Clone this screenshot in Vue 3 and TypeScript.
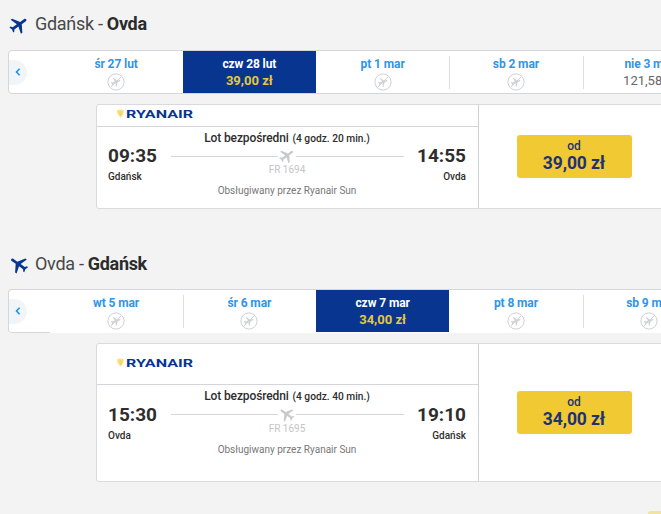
<script setup lang="ts">
interface Day {
  label: string
  price?: string
  active?: boolean
}

interface Flight {
  id: string
  direction: 'out' | 'back'
  from: string
  to: string
  days: Day[]
  departure: string
  arrival: string
  duration: string
  number: string
  price: string
}

const flights: Flight[] = [
  {
    id: 'outbound',
    direction: 'out',
    from: 'Gdańsk',
    to: 'Ovda',
    days: [
      { label: 'śr 27 lut' },
      { label: 'czw 28 lut', price: '39,00 zł', active: true },
      { label: 'pt 1 mar' },
      { label: 'sb 2 mar' },
      { label: 'nie 3 mar', price: '121,58 zł' },
    ],
    departure: '09:35',
    arrival: '14:55',
    duration: '(4 godz. 20 min.)',
    number: 'FR 1694',
    price: '39,00 zł',
  },
  {
    id: 'inbound',
    direction: 'back',
    from: 'Ovda',
    to: 'Gdańsk',
    days: [
      { label: 'wt 5 mar' },
      { label: 'śr 6 mar' },
      { label: 'czw 7 mar', price: '34,00 zł', active: true },
      { label: 'pt 8 mar' },
      { label: 'sb 9 mar' },
    ],
    departure: '15:30',
    arrival: '19:10',
    duration: '(4 godz. 40 min.)',
    number: 'FR 1695',
    price: '34,00 zł',
  },
]

const plane =
  'M21 16v-2l-8-5V3.5c0-.83-.67-1.5-1.5-1.5S10 2.67 10 3.5V9l-8 5v2l8-2.5V19l-2 1.5V22l3.5-1 3.5 1v-1.5L13 19v-5.5l8 2.5z'
</script>

<template>
  <main class="page">
    <section v-for="f in flights" :key="f.id" class="flight" :class="f.direction">
      <h2 class="title">
        <svg class="title-icon" viewBox="0 0 24 24"><path :d="plane" /></svg>
        <span class="title-text">{{ f.from }} - <b>{{ f.to }}</b></span>
      </h2>

      <div class="strip">
        <div class="prev-wrap">
          <button class="prev" aria-label="Poprzedni">
            <svg viewBox="0 0 6 8"><path d="M4.6 0.8 1.5 4l3.1 3.2" /></svg>
          </button>
        </div>
        <div v-for="d in f.days" :key="d.label" class="day" :class="{ active: d.active }">
          <span class="day-label">{{ d.label }}</span>
          <span v-if="d.price" class="day-price">{{ d.price }}</span>
          <svg v-else class="no-flight" viewBox="0 0 18 18">
            <circle cx="9" cy="9" r="8.1" />
            <g transform="translate(9 9) rotate(70) scale(.48) translate(-11.5 -12)">
              <path :d="plane" />
            </g>
            <line x1="3.6" y1="14.4" x2="14.4" y2="3.6" />
          </svg>
        </div>
      </div>

      <div class="card">
        <div class="details">
          <div class="carrier">
            <svg class="logo" viewBox="0 0 78 12">
              <path
                class="harp"
                d="M.8 2.6Q2.6.8 4.3 1.8 6.1.8 7.9 2.4 7.8 6.4 4.8 9.7 1.1 7.1.8 2.6z"
              />
              <path class="harp-line" d="M2.5 3 5 8M4.3 2.6 5.4 7M6.2 2.8 5.7 6.5" />
              <text x="10" y="9.8" textLength="67" lengthAdjust="spacingAndGlyphs">RYANAIR</text>
            </svg>
          </div>
          <div class="route">
            <div class="point">
              <strong>{{ f.departure }}</strong>
              <span>{{ f.from }}</span>
            </div>
            <div class="middle">
              <div class="kind">
                Lot bezpośredni <small>{{ f.duration }}</small>
              </div>
              <div class="line">
                <svg viewBox="0 0 24 24"><path :d="plane" /></svg>
              </div>
              <div class="number">{{ f.number }}</div>
              <div class="operator">Obsługiwany przez Ryanair Sun</div>
            </div>
            <div class="point end">
              <strong>{{ f.arrival }}</strong>
              <span>{{ f.to }}</span>
            </div>
          </div>
        </div>
        <div class="offer">
          <button class="buy">
            <span>od</span>
            <strong>{{ f.price }}</strong>
          </button>
        </div>
      </div>
    </section>
    <div class="next-button"></div>
  </main>
</template>

<style>
body {
  background: #f3f3f3;
}
</style>

<style scoped>
.page {
  box-sizing: border-box;
  width: 661px;
  height: 514px;
  overflow: hidden;
  background: #f3f3f3;
  font-family: Roboto, 'Noto Sans', sans-serif;
  color: #2e2e2e;
}

.flight {
  height: 240px;
}

.flight.back {
  height: 271px;
}

.title {
  display: flex;
  align-items: center;
  height: 50px;
  box-sizing: border-box;
  margin: 0;
  padding: 0 0 3px 8px;
  font-size: 18px;
  font-weight: 400;
  letter-spacing: -0.3px;
  color: #484848;
}

.back .title {
  height: 49px;
  padding-bottom: 3px;
}

.title b {
  font-weight: 700;
  color: #2b2b2b;
}

.title-icon {
  width: 22px;
  height: 22px;
  margin-right: 5px;
  fill: #073590;
  transform: translateY(1px) rotate(54deg);
}

.back .title-icon {
  transform: translateY(1px) rotate(-54deg);
}

.strip {
  display: flex;
  box-sizing: border-box;
  width: 720px;
  height: 44px;
  margin-left: 8px;
  border: 1px solid #d3d6da;
  border-radius: 4px 0 0 4px;
  background: #fff;
}

.back .strip {
  border-bottom-color: #fff;
}

.prev-wrap {
  display: flex;
  align-items: center;
  flex: none;
  width: 41px;
  margin-right: -0.6px;
}

.back .prev-wrap {
  height: 42px;
  border-bottom: 1px solid #d3d6da;
  border-bottom-left-radius: 3px;
}

.prev {
  display: flex;
  align-items: center;
  justify-content: center;
  width: 18px;
  height: 25px;
  padding: 0;
  border: 0;
  border-radius: 0 13px 13px 0;
  background: #f2f5f7;
}

.prev svg {
  width: 6px;
  height: 8px;
  fill: none;
  stroke: #2091eb;
  stroke-width: 1.6;
}

.day {
  position: relative;
  display: flex;
  flex-direction: column;
  align-items: center;
  flex: none;
  box-sizing: border-box;
  width: 133.3px;
  height: 42px;
  padding-top: 5px;
  font-size: 12px;
  line-height: 16px;
}

.day + .day:not(.active)::before {
  content: '';
  position: absolute;
  left: 0;
  top: 5px;
  height: 33px;
  border-left: 1px solid #dcdee1;
}

.day.active + .day::before {
  display: none;
}

.day.active {
  background: #073590;
}

.day-label {
  font-weight: 700;
  letter-spacing: -0.1px;
  color: #2f95e8;
}

.active .day-label {
  color: #fff;
}

.day-price {
  font-size: 13px;
  line-height: 18px;
  color: #666;
}

.active .day-price {
  font-weight: 700;
  color: #e6c83c;
}

.no-flight {
  width: 18px;
  height: 18px;
  margin-top: 1px;
  fill: none;
  stroke: #cfd1d4;
}

.no-flight g {
  fill: #cfd1d4;
  stroke: none;
}

.card {
  display: flex;
  box-sizing: border-box;
  width: 574px;
  height: 105px;
  margin: 10px 0 0 96px;
  border: 1px solid #d8dadd;
  border-radius: 3px;
  background: #fff;
}

.back .card {
  height: 139px;
}

.details {
  flex: none;
  width: 381px;
  border-right: 1px solid #cfd2d5;
}

.carrier {
  display: flex;
  align-items: center;
  box-sizing: border-box;
  height: 22px;
  padding: 0 0 3px 19px;
  border-bottom: 1px solid #d3d5d8;
}

.back .carrier {
  height: 41px;
  padding-bottom: 2px;
}

.logo {
  width: 78px;
  height: 12px;
}

.logo text {
  font: 700 11.5px Roboto, sans-serif;
  fill: #073590;
}

.harp {
  fill: #f9e58d;
}

.harp-line {
  fill: none;
  stroke: #f1c933;
  stroke-width: 0.6;
}

.route {
  display: flex;
  justify-content: space-between;
  padding: 3px 12px 0 11px;
}

.point {
  display: flex;
  flex-direction: column;
  width: 58px;
  padding-top: 14px;
}

.back .point {
  padding-top: 15px;
}

.point strong {
  font-size: 19px;
  font-weight: 700;
  line-height: 24px;
}

.point span {
  margin-top: 2px;
  font-size: 10px;
  font-weight: 500;
  line-height: 13px;
}

.point.end {
  align-items: flex-end;
}

.middle {
  display: flex;
  flex-direction: column;
  align-items: center;
  width: 233px;
}

.kind {
  font-size: 12px;
  font-weight: 500;
  line-height: 16px;
  letter-spacing: -0.12px;
  white-space: nowrap;
}

.kind small {
  margin-left: 1px;
  font-size: 10.2px;
  letter-spacing: 0;
}

.line {
  display: flex;
  align-items: center;
  width: 100%;
  height: 18px;
}

.line::before,
.line::after {
  content: '';
  flex: 1;
  height: 1px;
  background: #d5d7d9;
}

.line svg {
  width: 18px;
  height: 18px;
  fill: #c8c9cb;
  transform: rotate(54deg);
}

.back .line svg {
  transform: rotate(-54deg);
}

.number {
  margin-top: -1px;
  font-size: 10px;
  line-height: 12px;
  color: #c4c5c8;
}

.back .number {
  margin-top: 0;
}

.operator {
  margin-top: 8px;
  font-size: 10px;
  line-height: 14px;
  color: #777;
}

.offer {
  display: flex;
  align-items: center;
  justify-content: center;
  flex: 1;
}

.buy {
  display: flex;
  flex-direction: column;
  align-items: center;
  width: 115px;
  height: 43px;
  padding: 4px 0 0;
  border: 0;
  border-radius: 3px;
  background: #f1c933;
  font-family: inherit;
  color: #1f3273;
}

.buy span {
  font-size: 12px;
  font-weight: 500;
  line-height: 15px;
}

.buy strong {
  font-size: 17.5px;
  font-weight: 700;
  letter-spacing: -0.1px;
  line-height: 19px;
}

.next-button {
  width: 40px;
  height: 20px;
  margin-left: 648px;
  border-radius: 3px;
  background: #f1e3a4;
}
</style>
